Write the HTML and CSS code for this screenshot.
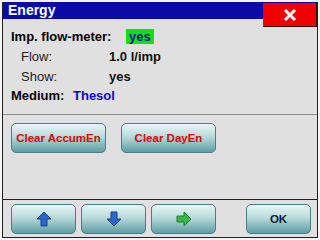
FILE: index.html
```html
<!DOCTYPE html>
<html lang="en">
<head>
    <meta charset="UTF-8">
    <title>Energy</title>
    <link rel="stylesheet" href="styles.css">
</head>
<body>
    <div class="window">
        <div class="title-bar">Energy</div>
        <button class="close-btn">
            <svg width="14" height="14" viewBox="0 0 14 14"><path d="M2 2 L12 12 M12 2 L2 12" stroke="#fff" stroke-width="3"/></svg>
        </button>

        <div class="content">
            <div class="row main">
                <span class="label">Imp. flow-meter:</span>
                <span class="value ok">yes</span>
            </div>
            <div class="row sub">
                <span class="label">Flow:</span>
                <span class="value">1.0 l/imp</span>
            </div>
            <div class="row sub">
                <span class="label">Show:</span>
                <span class="value">yes</span>
            </div>
            <div class="row medium">
                <span class="label">Medium:</span>
                <span class="value blue">Thesol</span>
            </div>

            <div class="actions">
                <button class="btn btn-red">Clear AccumEn</button>
                <button class="btn btn-red">Clear DayEn</button>
            </div>
        </div>

        <!-- barra inferior -->
        <div class="footer">
            <button class="btn nav">
                <svg width="16" height="16" viewBox="0 0 16 16"><path d="M8 1 L15 8 L11 8 L11 15 L5 15 L5 8 L1 8 Z" fill="#2a66c8" stroke="#1a3f8a" stroke-width="1"/></svg>
            </button>
            <button class="btn nav">
                <svg width="16" height="16" viewBox="0 0 16 16"><path d="M8 15 L15 8 L11 8 L11 1 L5 1 L5 8 L1 8 Z" fill="#2a66c8" stroke="#1a3f8a" stroke-width="1"/></svg>
            </button>
            <button class="btn nav">
                <svg width="16" height="16" viewBox="0 0 16 16"><path d="M15 8 L8 1 L8 5 L1 5 L1 11 L8 11 L8 15 Z" fill="#3cb44c" stroke="#247a30" stroke-width="1"/></svg>
            </button>
            <button class="btn nav ok-btn">OK</button>
        </div>
    </div>
</body>
</html>
```
FILE: styles.css
```css
body {
    margin: 0;
    background-color: #f4f4f4;
    font-family: 'Liberation Sans', Arial, sans-serif;
    font-size: 13px;
}
.window {
    position: relative;
    width: 316px;
    height: 236px;
    margin: 2px 0 0 2px;
    display: flex;
    flex-direction: column;
    background-color: #e0e0e0;
    border-left: 1px solid #202020;
    border-right: 1px solid #202020;
    border-bottom: 1px solid #202020;
    box-sizing: border-box;
}
.title-bar {
    height: 17px;
    background-color: #0a0aa4;
    color: #fff;
    font-weight: bold;
    font-size: 14px;
    line-height: 17px;
    padding-left: 5px;
}
.close-btn {
    position: absolute;
    top: 1px;
    right: 0;
    width: 54px;
    height: 24px;
    padding: 0;
    background-color: #f00000;
    border: none;
    border-right: 1px solid #300000;
    border-bottom: 1px solid #300000;
    display: flex;
    align-items: center;
    justify-content: center;
}
.content {
    flex: 1;
    padding-top: 8px;
}
.row {
    display: flex;
    align-items: center;
    height: 19.7px;
}
.row .label {
    font-weight: bold;
}
.main {
    padding-left: 8px;
}
.main .label {
    width: 115px;
}
.sub {
    padding-left: 18px;
}
.sub .label {
    width: 88px;
    font-weight: normal;
    color: #202020;
}
.medium {
    padding-left: 8px;
}
.medium .label {
    width: 62px;
}
.value {
    font-weight: bold;
    color: #101010;
}
.ok {
    background-color: #10e010;
    color: #0a0aa4;
    padding: 0 3px;
    line-height: 15px;
}
.blue {
    color: #0a0ac8;
}
.actions {
    margin-top: 8px;
    border-top: 1px solid #909090;
    padding: 8px 0 0 8px;
    display: flex;
    gap: 15px;
}
.btn {
    height: 30px;
    border: 1px solid #4a7c8c;
    border-radius: 5px;
    background: linear-gradient(#e8f6f6, #b8dada 45%, #5e9ea2);
    font-family: 'Liberation Sans', Arial, sans-serif;
    font-weight: bold;
    font-size: 11.5px;
    padding: 0;
}
.btn-red {
    width: 95px;
    color: #e00000;
}
.footer {
    height: 38px;
    border-top: 1px solid #202020;
    display: flex;
    gap: 5px;
    padding: 4px 0 0 8px;
    box-sizing: border-box;
}
.nav {
    width: 65px;
    display: flex;
    align-items: center;
    justify-content: center;
}
.ok-btn {
    margin-left: 25px;
    color: #0a1a3a;
}
```
